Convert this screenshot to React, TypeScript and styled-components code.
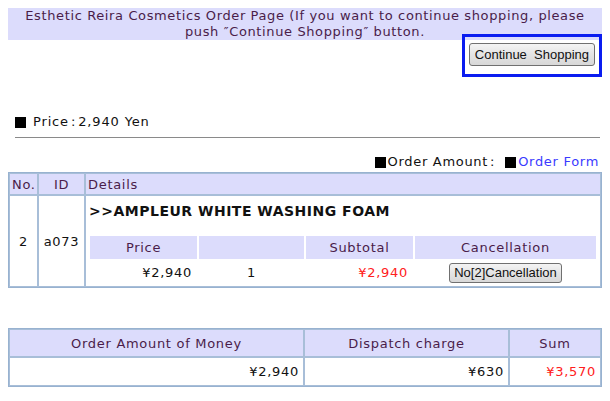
import React from "react";
import styled, { createGlobalStyle } from "styled-components";

const Global = createGlobalStyle`
  body {
    margin: 8px;
    background: #ffffff;
    font-family: "DejaVu Sans", "Noto Sans CJK JP", sans-serif;
    font-size: 13px;
    letter-spacing: 0.7px;
    color: #111;
  }
`;

const Page = styled.div`
  width: 594px;
`;

const Banner = styled.div`
  background: #dcdcfc;
  color: #4a1d4a;
  text-align: center;
  font-size: 13px;
  line-height: 16px;
  letter-spacing: 0.62px;
`;

const ButtonRow = styled.div`
  display: flex;
  justify-content: flex-end;
  padding: 1px 7px 0 0;
`;

const Focus = styled.div`
  outline: 3px solid #0a1cf0;
  outline-offset: 4px;
  padding: 2px 0 4px;
  display: flex;
`;

const GrayButton = styled.button<{ $small?: boolean }>`
  font-family: "Liberation Sans", Arial, sans-serif;
  font-size: 13px;
  letter-spacing: 0;
  color: #111;
  height: ${(p) => (p.$small ? "20px" : "23px")};
  padding: 0 ${(p) => (p.$small ? "4px" : "5px")};
  border: 1px solid #707070;
  border-radius: 3px;
  background: linear-gradient(#f4f4f4, #e4e4e4 50%, #d8d8d8);
  white-space: pre;
  cursor: pointer;
`;

const PriceLine = styled.div`
  margin-top: 44px;
  padding-left: 7px;
  display: flex;
  align-items: center;
  gap: 7px;
  line-height: 16px;
  letter-spacing: 0.85px;
`;

const Square = styled.span`
  display: inline-block;
  width: 11px;
  height: 11px;
  background: #000;
`;

const Colon = styled.span<{ $after?: number }>`
  margin: 0 ${(p) => p.$after ?? 2}px 0 2px;
`;

const Rule = styled.div`
  margin: 7px 2px 0 7px;
  border-top: 1px solid #8a8a8a;
`;

const AmountLine = styled.div`
  margin-top: 16px;
  display: flex;
  justify-content: flex-end;
  align-items: center;
  gap: 2px;
  padding-right: 3px;
  line-height: 16px;
`;

const Link = styled.a`
  color: #3a3aff;
  text-decoration: none;
`;

const Table = styled.table`
  width: 100%;
  border-collapse: separate;
  border-spacing: 0;
  border: 1px solid #98b2d0;
  margin-top: 2px;
  table-layout: fixed;
`;

const Th = styled.th<{ $w?: string; $align?: string }>`
  box-sizing: border-box;
  background: #dcdcfc;
  color: #4a1d4a;
  font-weight: normal;
  text-align: ${(p) => p.$align || "center"};
  border: 1px solid #a8bed8;
  height: 22px;
  padding: 0 2px;
  width: ${(p) => p.$w || "auto"};
`;

const Td = styled.td<{ $align?: string; $red?: boolean }>`
  border: 1px solid #a8bed8;
  text-align: ${(p) => p.$align || "center"};
  color: ${(p) => (p.$red ? "#ff2020" : "#111")};
  padding: 0 3px;
  vertical-align: middle;
`;

const DetailCell = styled.td`
  border: 1px solid #a8bed8;
  padding: 6px 2px 0 2px;
  vertical-align: top;
`;

const Title = styled.div`
  font-weight: bold;
  font-size: 14px;
  letter-spacing: 0.5px;
  line-height: 18px;
  padding-left: 1px;
  color: #111;
`;

const Inner = styled.table`
  width: 100%;
  border-collapse: separate;
  border-spacing: 2px;
  margin-top: 14px;
  table-layout: fixed;
`;

const ITh = styled.th<{ $w: string }>`
  box-sizing: border-box;
  background: #dcdcfc;
  color: #4a1d4a;
  font-weight: normal;
  height: 23px;
  padding: 0;
  width: ${(p) => p.$w};
`;

const ITd = styled.td<{ $align?: string; $red?: boolean }>`
  text-align: ${(p) => p.$align || "center"};
  color: ${(p) => (p.$red ? "#ff2020" : "#111")};
  height: 23px;
  padding: 0 5px;
`;

const SumTable = styled(Table)`
  margin-top: 40px;
`;

const STh = styled(Th)`
  height: 28px;
`;

const STd = styled(Td)`
  height: 27px;
  padding: 0 4px;
`;

export default function App() {
  return (
    <Page>
      <Global />
      <Banner>
        Esthetic Reira Cosmetics Order Page (If you want to continue shopping, please
        <br />
        push ″Continue Shopping″ button.
      </Banner>
      <ButtonRow>
        <Focus>
          <GrayButton>{"Continue  Shopping"}</GrayButton>
        </Focus>
      </ButtonRow>
      <PriceLine>
        <Square />
        <span>
          Price<Colon>:</Colon>2,940 Yen
        </span>
      </PriceLine>
      <Rule />
      <AmountLine>
        <Square />
        <span>
          Order Amount<Colon $after={8}>:</Colon>
        </span>
        <Square />
        <Link href="#">Order Form</Link>
      </AmountLine>
      <Table>
        <thead>
          <tr>
            <Th $w="29px">No.</Th>
            <Th $w="47px">ID</Th>
            <Th $align="left">Details</Th>
          </tr>
        </thead>
        <tbody>
          <tr>
            <Td>2</Td>
            <Td>a073</Td>
            <DetailCell>
              <Title>&gt;&gt;AMPLEUR WHITE WASHING FOAM</Title>
              <Inner>
                <thead>
                  <tr>
                    <ITh $w="107px">Price</ITh>
                    <ITh $w="105px"></ITh>
                    <ITh $w="107px">Subtotal</ITh>
                    <ITh $w="auto">Cancellation</ITh>
                  </tr>
                </thead>
                <tbody>
                  <tr>
                    <ITd $align="right">¥2,940</ITd>
                    <ITd>1</ITd>
                    <ITd $align="right" $red>
                      ¥2,940
                    </ITd>
                    <ITd>
                      <GrayButton $small>No[2]Cancellation</GrayButton>
                    </ITd>
                  </tr>
                </tbody>
              </Inner>
            </DetailCell>
          </tr>
        </tbody>
      </Table>
      <SumTable>
        <thead>
          <tr>
            <STh $w="295px">Order Amount of Money</STh>
            <STh $w="205px">Dispatch charge</STh>
            <STh>Sum</STh>
          </tr>
        </thead>
        <tbody>
          <tr>
            <STd $align="right">¥2,940</STd>
            <STd $align="right">¥630</STd>
            <STd $align="right" $red>
              ¥3,570
            </STd>
          </tr>
        </tbody>
      </SumTable>
    </Page>
  );
}
